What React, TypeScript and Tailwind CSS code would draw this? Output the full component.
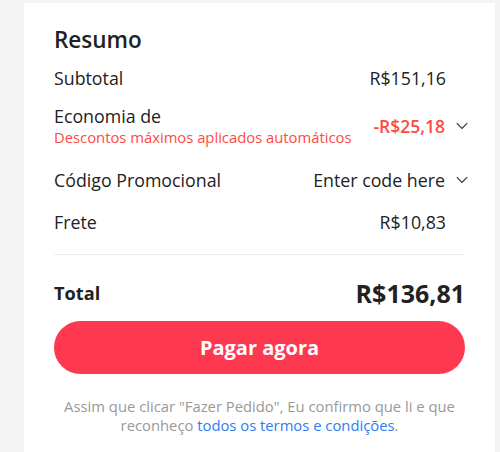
import React from "react";

const Chevron = () => (
  <svg width="12" height="8" viewBox="0 0 12 8" className="-mr-[3px] ml-[11px]" fill="none">
    <path d="M0.8 1.2 L6 6.4 L11.2 1.2" stroke="#333" strokeWidth="1.1" />
  </svg>
);

export default function App() {
  return (
    <div className="min-h-[452px] w-[500px] bg-[#f4f4f4] pt-[3px]" style={{ fontFamily: '"Open Sans", sans-serif' }}>
      <div className="ml-[24px] w-[471px] bg-white pl-[30px] pr-[30px] pt-[22px] pb-[20px] text-[#222]">
        <h2 className="text-[22.5px] font-semibold leading-[30px]">Resumo</h2>
        <div className="mt-[11px] flex items-center justify-between text-[17.8px] leading-[24px]">
          <span>Subtotal</span>
          <span className="mr-[19px]">R$151,16</span>
        </div>
        <div className="mt-[15px] flex items-center justify-between">
          <div className="flex flex-col">
            <span className="text-[17.8px] leading-[22px]">Economia de</span>
            <span className="text-[14.8px] leading-[20px] text-[#ff4a3f]">Descontos máximos aplicados automáticos</span>
          </div>
          <div className="flex items-center">
            <span className="text-[17.5px] font-semibold text-[#ff4a3f]">-R$25,18</span>
            <Chevron />
          </div>
        </div>
        <div className="mt-[21px] flex items-center justify-between text-[17.8px] leading-[24px]">
          <span>Código Promocional</span>
          <div className="flex items-center">
            <span>Enter code here</span>
            <Chevron />
          </div>
        </div>
        <div className="mt-[18px] flex items-center justify-between text-[17.8px] leading-[24px]">
          <span>Frete</span>
          <span className="mr-[19px]">R$10,83</span>
        </div>
        <div className="mt-[20px] h-px bg-[#eeeeee]" />
        <div className="mt-[22px] flex items-center justify-between leading-[32px]">
          <span className="text-[18.2px] font-bold">Total</span>
          <span className="text-[25px] font-bold">R$136,81</span>
        </div>
        <button className="mt-[12px] flex h-[53px] w-full items-center justify-center rounded-full bg-[#fd384f] text-[20px] font-bold text-white">
          Pagar agora
        </button>
        <p className="mt-[23px] text-center text-[14.8px] leading-[19px] text-[#999]">
          Assim que clicar "Fazer Pedido", Eu confirmo que li e que reconheço{" "}
          <span className="text-[#2e7cf6]">todos os termos e condições</span>.
        </p>
      </div>
    </div>
  );
}
